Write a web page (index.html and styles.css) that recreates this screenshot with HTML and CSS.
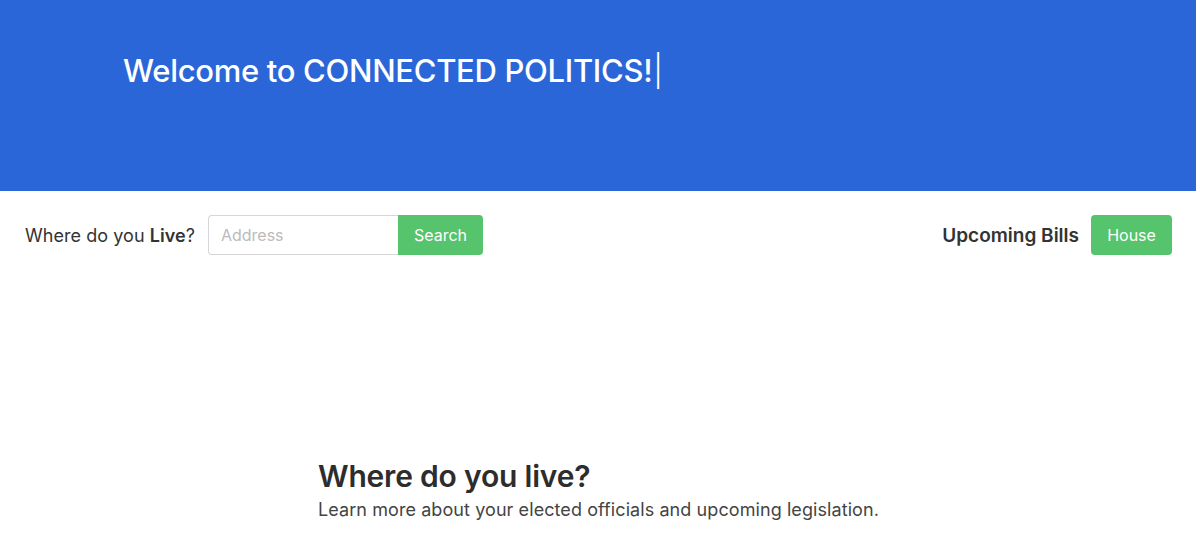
FILE: index.html
```html
<!DOCTYPE html>
<html>
<head>
<meta charset="utf-8">
<link rel="stylesheet" href="styles.css">
</head>
<body>
<header class="hero">
  <h1 class="hero-title">Welcome to CONNECTED POLITICS!<span class="cursor">|</span></h1>
</header>
<div class="toolbar">
  <div class="search">
    <span class="label">Where do you <b>Live</b>?</span>
    <div class="input-group">
      <input class="address" type="text" placeholder="Address">
      <button class="btn btn-search">Search</button>
    </div>
  </div>
  <div class="bills">
    <span class="bills-label">Upcoming Bills</span>
    <button class="btn btn-round">House</button>
  </div>
</div>
<section class="intro">
  <h2 class="intro-title">Where do you live?</h2>
  <p class="intro-text">Learn more about your elected officials and upcoming legislation.</p>
</section>
</body>
</html>
```
FILE: styles.css
```css
* { box-sizing: border-box; }
body {
  margin: 0;
  font-family: Inter, "Noto Sans", sans-serif;
  color: #333;
  background: #fff;
}
.hero {
  background: #2b66d9;
  height: 191px;
  padding: 52px 0 0 123px;
}
.hero-title {
  margin: 0;
  color: #fff;
  font-size: 31px;
  font-weight: 500;
  letter-spacing: -0.3px;
}
.cursor { font-weight: 300; margin-left: 1px; }
.toolbar {
  display: flex;
  justify-content: space-between;
  align-items: center;
  padding: 24px 24px 0 25px;
}
.search, .bills { display: flex; align-items: center; }
.label { font-size: 18px; margin-right: 13px; color: #333; letter-spacing: 0.05px; }
.label b { font-weight: 600; }
.input-group { display: flex; }
.address {
  width: 190px;
  height: 40px;
  border: 1px solid #d6d6d6;
  border-right: none;
  border-radius: 4px 0 0 4px;
  padding: 0 12px;
  font-family: inherit;
  font-size: 16px;
  outline: none;
}
.address::placeholder { color: #bbb; }
.btn {
  height: 40px;
  border: none;
  background: #55c46c;
  color: #fff;
  font-family: inherit;
  font-size: 16px;
  padding: 0;
  border-radius: 0 4px 4px 0;
}
.btn-search { width: 85px; }
.btn-round { border-radius: 4px; width: 81px; }
.bills-label { font-size: 19px; font-weight: 600; margin-right: 12px; color: #333; }
.intro { padding: 203px 0 0 318px; }
.intro-title { margin: 0; font-size: 30px; font-weight: 600; color: #2d2d2d; letter-spacing: -0.2px; }
.intro-text { margin: 5px 0 0; font-size: 18px; color: #444; letter-spacing: 0.08px; }
```
